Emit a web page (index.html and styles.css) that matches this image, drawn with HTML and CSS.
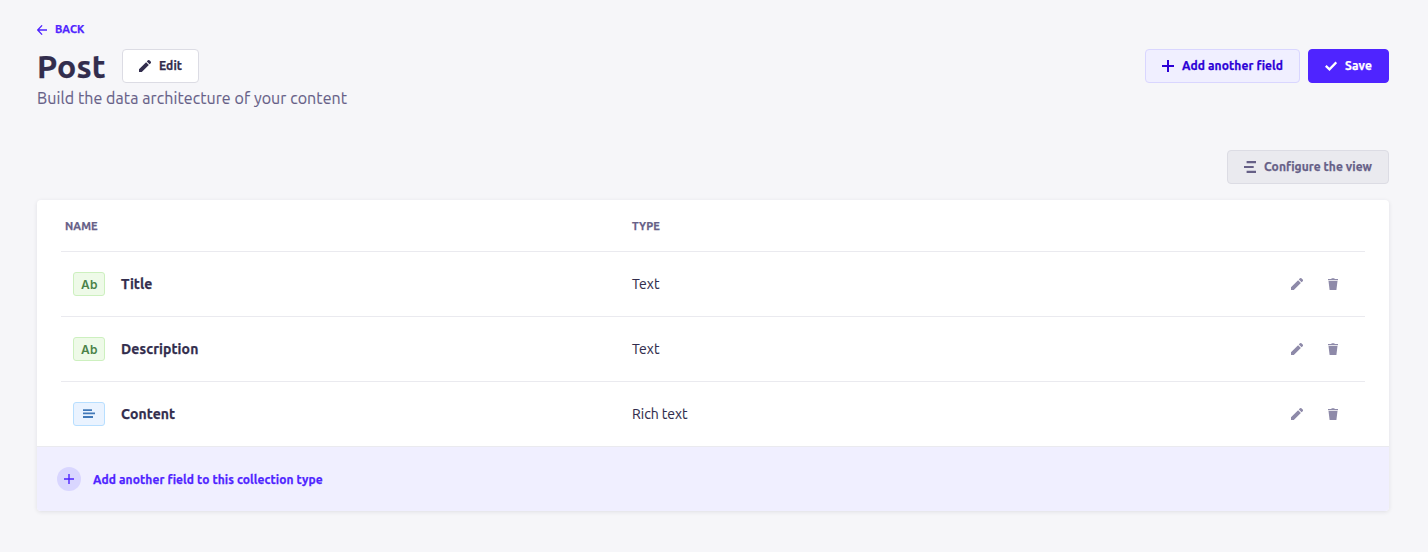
FILE: index.html
```html
<!DOCTYPE html>
<html lang="en">
<head>
<meta charset="utf-8">
<title>Post</title>
<link rel="stylesheet" href="styles.css">
</head>
<body>
<svg class="defs" width="0" height="0" aria-hidden="true">
  <symbol id="pencil" viewBox="0 0 24 24"><path d="M14.200 4.300l5.500 5.500L5.600 24H0v-5.600zM23.400 6.300l-2.200 2.200-5.600-5.600L17.800.7a2.200 2.200 0 0 1 3.100 0l2.500 2.500a2.200 2.200 0 0 1 0 3.100z"/></symbol>
  <symbol id="trash" viewBox="0 0 24 24"><path d="M2 2h6.500l1-1.700h5l1 1.700H22v2.400H2zM3 6.200h18L18.800 24H5.200z"/></symbol>
</svg>
<main class="page">
  <header class="header">
    <a class="back"><svg width="10" height="10" viewBox="0 0 10 10"><path d="M5.100.4L.7 5l4.400 4.600M.7 5H10" fill="none" stroke="currentColor" stroke-width="1.300"/></svg><span>BACK</span></a>
    <div class="title-row">
      <h1 class="title">Post</h1>
      <button class="btn btn-edit"><svg width="12" height="12"><use href="#pencil"/></svg><span>Edit</span></button>
      <div class="actions">
        <button class="btn btn-add"><svg width="12" height="12" viewBox="0 0 12 12"><path d="M5 0h2v5h5v2H7v5H5V7H0V5h5z"/></svg><span>Add another field</span></button>
        <button class="btn btn-save"><svg width="12" height="12" viewBox="0 0 12 12"><path d="M.8 5.800l3.700 3.500L11.300 2.300" fill="none" stroke="currentColor" stroke-width="2.300"/></svg><span>Save</span></button>
      </div>
    </div>
    <p class="subtitle">Build the data architecture of your content</p>
  </header>
  <div class="toolbar">
    <button class="btn btn-config"><svg width="12" height="12" viewBox="0 0 12 12"><path d="M2.600 0H12v2.200H2.600zM0 5h9.700v2H0zM2.600 9.800H12V12H2.600z"/></svg><span>Configure the view</span></button>
  </div>
  <section class="card">
    <div class="table">
      <div class="row head"><span>NAME</span><span>TYPE</span></div>
      <div class="row">
        <div class="field"><span class="badge text-badge">Ab</span><strong>Title</strong></div>
        <span class="type">Text</span>
        <div class="tools"><svg width="12" height="12"><use href="#pencil"/></svg><svg width="12" height="12"><use href="#trash"/></svg></div>
      </div>
      <div class="row">
        <div class="field"><span class="badge text-badge">Ab</span><strong>Description</strong></div>
        <span class="type">Text</span>
        <div class="tools"><svg width="12" height="12"><use href="#pencil"/></svg><svg width="12" height="12"><use href="#trash"/></svg></div>
      </div>
      <div class="row">
        <div class="field"><span class="badge rich-badge"><svg width="12" height="10" viewBox="0 0 12 10"><path d="M0 .3h9V2H0zM0 3.500h12v1.800H0zM0 7h10v2H0z"/></svg></span><strong>Content</strong></div>
        <span class="type">Rich text</span>
        <div class="tools"><svg width="12" height="12"><use href="#pencil"/></svg><svg width="12" height="12"><use href="#trash"/></svg></div>
      </div>
    </div>
    <button class="add-row"><span class="circle"><svg width="10" height="10" viewBox="0 0 10 10"><path d="M4.300 0h1.400v4.300H10v1.400H5.700V10H4.300V5.700H0V4.300h4.300z"/></svg></span><span>Add another field to this collection type</span></button>
  </section>
</main>
</body>
</html>
```
FILE: styles.css
```css
* { box-sizing: border-box; }
body {
  margin: 0;
  background: #f6f6f9;
  color: #322d4d;
  font-family: Ubuntu, "Noto Sans", sans-serif;
}
svg { display: block; flex: none; fill: currentColor; }
.defs { position: absolute; }
button { font-family: inherit; cursor: pointer; }
.page { width: 1428px; height: 552px; padding: 21px 39px 0 37px; }
.header { height: 129px; }
.back {
  display: flex; align-items: center; gap: 8px; height: 16px;
  color: #4f24ff; font-size: 11px; font-weight: 700; letter-spacing: 0.1px;
}
.back svg { margin-top: 2px; }
.title-row { display: flex; height: 34px; margin-top: 12px; }
.title {
  margin: 0; width: 85px; font-size: 32px; line-height: 34px;
  font-weight: 700; letter-spacing: 0.2px; white-space: nowrap;
}
.title, .back, .btn span, .head, .field strong, .add-row span { -webkit-text-stroke: 0.25px currentColor; }
.btn {
  display: flex; align-items: center; gap: 8px; height: 34px; padding: 0 0 0 16px;
  border: 1px solid; border-radius: 4px; font-size: 12px; font-weight: 700;
  letter-spacing: 0.1px; white-space: nowrap;
}
.btn span { line-height: 16px; }
.btn-edit { width: 77px; background: #fff; border-color: #dcdce4; color: #322d4d; }
.actions { display: flex; gap: 8px; margin-left: auto; }
.btn-add { width: 155px; background: #f0efff; border-color: #d9d6ff; color: #2c00d6; }
.btn-save { width: 81px; background: #4f24ff; border-color: #4f24ff; color: #fff; }
.subtitle {
  margin: 3px 0 0; font-size: 16px; line-height: 24px; color: #666087;
  letter-spacing: 0.08px;
}
.subtitle, .type { -webkit-text-stroke: 0.12px currentColor; }
.toolbar { display: flex; justify-content: flex-end; }
.btn-config { width: 162px; background: #eaeaef; border-color: #dcdce4; color: #666087; letter-spacing: 0.06px; }
.card {
  margin-top: 16px; background: #fff; border-radius: 4px; overflow: hidden;
  box-shadow: 0 1px 4px rgba(33, 33, 52, .1);
}
.table { padding: 0 24px; }
.row {
  display: grid; grid-template-columns: 571px 1fr auto; align-items: center;
  height: 65px; border-top: 1px solid #eaeaef;
}
.head {
  grid-template-columns: 567px 1fr; height: 51px; padding-left: 4px; border: 0;
  color: #666087; font-size: 11px; font-weight: 700; letter-spacing: 0.1px;
}
.field {
  display: flex; align-items: center; gap: 16px; padding-left: 12px;
  font-size: 14px; letter-spacing: 0.1px;
}
.badge {
  display: flex; align-items: center; justify-content: center;
  width: 32px; height: 24px; border: 1px solid; border-radius: 3px;
}
.text-badge {
  padding-left: 1px; background: #eefae8; border-color: #cdf0bf; color: #4b8249;
  font: 600 12px Inter, sans-serif; letter-spacing: 0.3px;
}
.rich-badge { background: #eaf3ff; border-color: #b8dfff; color: #4279b8; }
.type { font-size: 14px; }
.tools { display: flex; gap: 24px; padding-right: 26px; color: #8e8aa9; }
.add-row {
  display: flex; align-items: center; gap: 12px; width: 100%; height: 65px;
  padding: 0 20px; border: 0; border-top: 1px solid #eaeaef; background: #f0efff;
  color: #4f24ff; font-size: 12px; font-weight: 700; letter-spacing: 0.1px;
}
.circle {
  display: flex; align-items: center; justify-content: center;
  width: 24px; height: 24px; border-radius: 50%; background: #d9d6ff;
}
```
